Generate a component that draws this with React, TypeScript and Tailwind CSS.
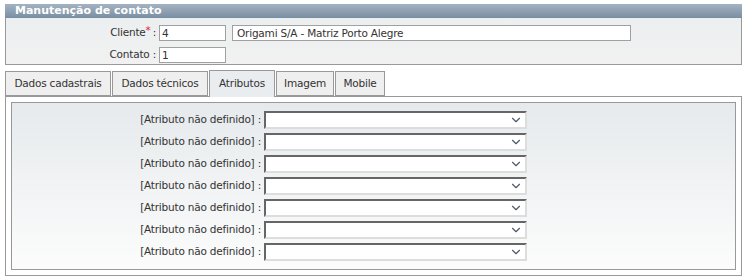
import React from 'react';
import { ChevronDown } from 'lucide-react';

const tabs = [
  { label: 'Dados cadastrais', w: 'w-[106px]' },
  { label: 'Dados técnicos', w: 'w-[96px]' },
  { label: 'Atributos', w: 'w-[66px]', active: true },
  { label: 'Imagem', w: 'w-[58px]' },
  { label: 'Mobile', w: 'w-[50px]' },
];

function AttrRow() {
  return (
    <div className="flex items-center h-[22px]">
      <span className="w-[252px] text-right pr-[3px]">[Atributo não definido] :</span>
      <div className="w-[263px] h-[18px] bg-white border-2 border-t-[#666] border-l-[#666] border-r-[#ddd] border-b-[#ddd] flex items-center justify-end pr-[2px]">
        <ChevronDown className="w-[14px] h-[14px] text-[#4f5b6c]" strokeWidth={2} />
      </div>
    </div>
  );
}

export default function App() {
  return (
    <div
      className="w-[747px] h-[280px] bg-white pt-[4px] px-[5px] text-[10.5px] tracking-[-0.2px] text-[#333]"
      style={{ fontFamily: '"DejaVu Sans", Verdana, sans-serif' }}
    >
      {/* Cabeçalho */}
      <div className="h-[14px] bg-gradient-to-b from-[#a3b3c2] to-[#7a8ea3] text-white text-[11px] tracking-normal font-bold leading-[14px] pl-[10px]">
        Manutenção de contato
      </div>
      <div className="h-[47px] border border-t-0 border-[#999] bg-gradient-to-b from-[#eceff0] to-[#f1f1f1] pt-[4px]">
        <div className="flex items-center h-[22px]">
          <span className="w-[153px] text-right pr-[3px]">
            Cliente<span className="text-[#e0203a] relative -top-[2px] pr-[2px]">*</span>:
          </span>
          <div className="w-[67px] h-[16px] bg-white border border-[#a0a0a0] leading-[14px] pl-[2px]">4</div>
          <div className="ml-[6px] w-[399px] h-[16px] bg-white border border-[#a0a0a0] leading-[14px] pl-[4px]">
            Origami S/A - Matriz Porto Alegre
          </div>
        </div>
        <div className="flex items-center h-[22px]">
          <span className="w-[153px] text-right pr-[3px]">Contato :</span>
          <div className="w-[67px] h-[16px] bg-white border border-[#a0a0a0] leading-[14px] pl-[2px]">1</div>
        </div>
      </div>

      {/* Abas */}
      <div className="flex gap-[1px] mt-[5px] h-[26px] items-end">
        {tabs.map((t) => (
          <div
            key={t.label}
            className={`${t.w} h-[25px] flex items-center justify-center border border-[#999] ${
              t.active
                ? 'h-[27px] border-b-0 bg-[#e9edef] relative top-[1px] z-10'
                : 'bg-[#efefef]'
            }`}
          >
            {t.label}
          </div>
        ))}
      </div>

      <div className="h-[180px] border border-[#999] p-[5px] bg-white">
        <div className="h-full border border-[#999] bg-gradient-to-b from-[#e6eaec] to-[#fcfcfc] pt-[6px]">
          {Array.from({ length: 7 }).map((_, i) => (
            <AttrRow key={i} />
          ))}
        </div>
      </div>
    </div>
  );
}
